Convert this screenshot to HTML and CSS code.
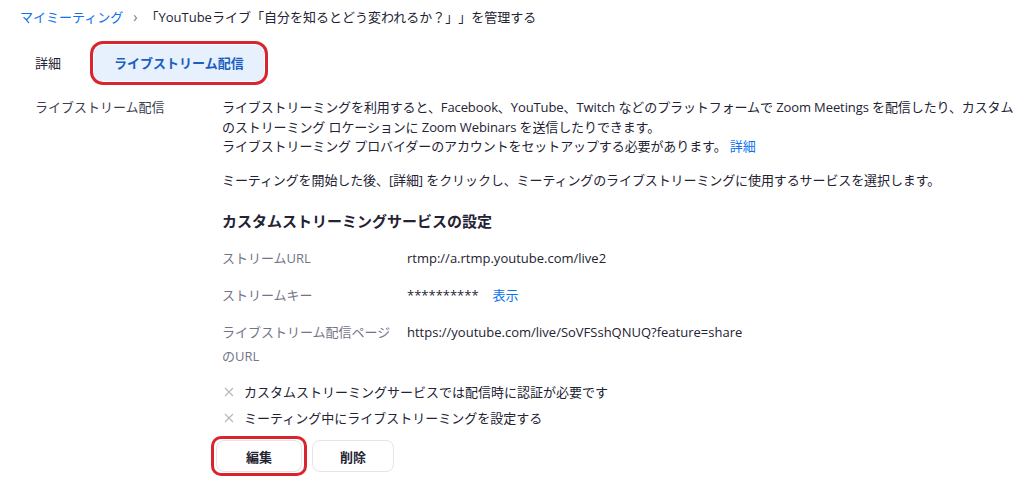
FILE: index.html
```html
<!DOCTYPE html>
<html lang="ja">
<head>
<meta charset="utf-8">
<link rel="stylesheet" href="styles.css">
</head>
<body>
<div class="page">
  <div class="breadcrumb">
    <a class="crumb-link">マイミーティング</a>
    <span class="crumb-sep">›</span>
    <span class="crumb-title">「YouTubeライブ「自分を知るとどう変われるか？」」を管理する</span>
  </div>

  <div class="tabs">
    <div class="tab">詳細</div>
    <div class="mark mark-tab">
      <div class="tab tab-active">ライブストリーム配信</div>
    </div>
  </div>

  <div class="section">
    <div class="section-label">ライブストリーム配信</div>
    <div class="section-body">
      <p class="desc">ライブストリーミングを利用すると、Facebook、YouTube、Twitch などのプラットフォームで Zoom Meetings を配信したり、カスタムのストリーミング ロケーションに Zoom Webinars を送信したりできます。<br>ライブストリーミング プロバイダーのアカウントをセットアップする必要があります。 <a class="link">詳細</a></p>
      <p class="desc desc-2">ミーティングを開始した後、[詳細] をクリックし、ミーティングのライブストリーミングに使用するサービスを選択します。</p>

      <h3 class="heading">カスタムストリーミングサービスの設定</h3>

      <div class="fields">
        <div class="f-label">ストリームURL</div>
        <div class="f-value">rtmp://a.rtmp.youtube.com/live2</div>
        <div class="f-label">ストリームキー</div>
        <div class="f-value"><span class="stars">**********</span><a class="link show">表示</a></div>
        <div class="f-label f-label-tall">ライブストリーム配信ページのURL</div>
        <div class="f-value">https://youtube.com/live/SoVFSshQNUQ?feature=share</div>
      </div>

      <ul class="checks">
        <li><svg class="x" width="10" height="10" viewBox="0 0 10 10"><path d="M1 1L9 9M9 1L1 9" stroke="#b3b6be" stroke-width="1.1" fill="none"/></svg>カスタムストリーミングサービスでは配信時に認証が必要です</li>
        <li><svg class="x" width="10" height="10" viewBox="0 0 10 10"><path d="M1 1L9 9M9 1L1 9" stroke="#b3b6be" stroke-width="1.1" fill="none"/></svg>ミーティング中にライブストリーミングを設定する</li>
      </ul>

      <div class="buttons">
        <div class="mark mark-btn"><button class="btn">編集</button></div>
        <button class="btn">削除</button>
      </div>
    </div>
  </div>
</div>
</body>
</html>
```

FILE: styles.css
```css
* { box-sizing: border-box; }
html, body { margin: 0; padding: 0; background: #fff; }
body {
  font-family: "Open Sans", "Noto Sans CJK JP", sans-serif;
  font-size: 13px;
  color: #232333;
  text-spacing-trim: space-all;
}
.page { width: 1024px; height: 479px; overflow: hidden; }

.breadcrumb {
  padding: 6px 0 0 20px;
  height: 28px;
  line-height: 20px;
  font-size: 13px;
  display: flex;
  align-items: center;
}
.crumb-link { color: #0e72ed; }
.crumb-sep { color: #6e7680; margin: 0 8px 0 10px; font-size: 14px; }
.crumb-title { color: #232333; }

.tabs {
  display: flex;
  align-items: center;
  padding-left: 20px;
  height: 70px;
}
.tab {
  height: 36px;
  line-height: 36px;
  padding: 0 15px;
  font-size: 13px;
  color: #232333;
  border-radius: 8px;
}
.tab-active {
  background: #e7f0fd;
  color: #1a5fbf;
  font-weight: 700;
  padding: 0 20px;
}
.mark {
  border: 3px solid #d7262f;
  border-radius: 13px;
  padding: 1px;
}
.mark-tab { margin-left: 14px; }

.section {
  display: grid;
  grid-template-columns: 187px 1fr;
  padding: 0 0 0 35px;
}
.section-label { color: #3d3d4f; line-height: 19.5px; }
.section-body { padding-right: 2px; }
.desc { margin: 0; line-height: 19.5px; color: #232333; letter-spacing: -0.1px; }
.desc-2 { margin-top: 14px; }
.link { color: #0e72ed; }

.heading {
  margin: 19px 0 0 0;
  font-size: 15px;
  font-weight: 700;
  line-height: 24px;
}
.fields {
  display: grid;
  grid-template-columns: 185px 1fr;
  row-gap: 17px;
  margin-top: 15px;
  line-height: 20px;
}
.f-label { color: #747487; width: 170px; }
.f-label-tall { line-height: 24px; margin-top: -2px; }
.f-value { color: #232333; }
.show { margin-left: 14px; }

.checks {
  list-style: none;
  margin: 14px 0 0 0;
  padding: 0;
  line-height: 20px;
}
.checks li { display: flex; align-items: center; margin-bottom: 6px; }
.x { margin: 0 10px 0 2px; flex: none; }

.buttons {
  display: flex;
  align-items: center;
  gap: 5px;
  margin: 8px 0 0 -11px;
}
.btn {
  font-family: inherit;
  font-size: 13px;
  font-weight: 700;
  color: #232333;
  background: #fff;
  border: 1px solid #e4e4ea;
  border-radius: 8px;
  height: 32px;
  padding: 0;
  width: 82px;
}
.mark-btn { padding: 1px 2px; border-radius: 10px; }
.mark-btn .btn { width: 86px; }
```
